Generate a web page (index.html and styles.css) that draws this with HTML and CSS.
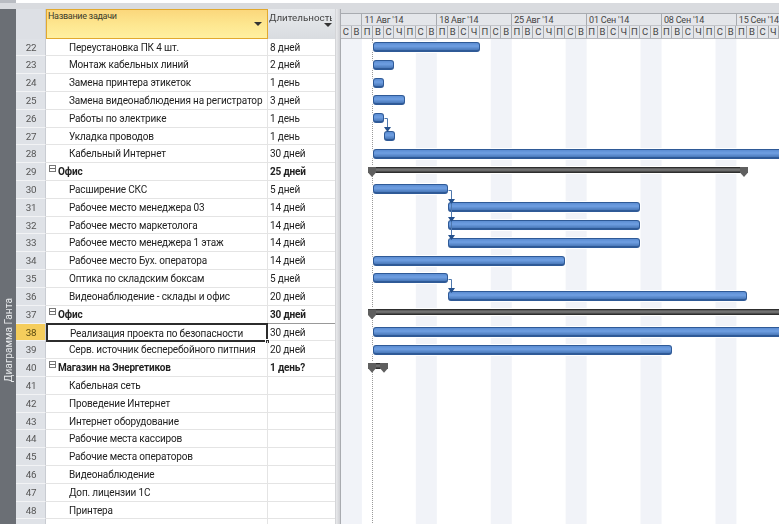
FILE: index.html
```html
<!DOCTYPE html>
<html lang="ru">
<head>
<meta charset="utf-8">
<title>Диаграмма Ганта</title>
<link rel="stylesheet" href="styles.css">
</head>
<body>
<div class="topstrip"><span class="topicon"></span><span class="topwhite"></span></div>
<div class="main">
  <aside class="viewbar"><span class="viewlabel">Диаграмма Ганта</span></aside>
  <section class="sheet">
    <div class="headrow">
      <div class="numhead"></div>
      <div class="namehead">Название задачи<i class="drop"></i></div>
      <div class="durhead"><span class="durclip">Длительность</span><i class="drop"></i></div>
    </div>
    <div class="row"><div class="num">22</div><div class="name">Переустановка ПК 4 шт.</div><div class="dur">8 дней</div></div>
    <div class="row"><div class="num">23</div><div class="name">Монтаж кабельных линий</div><div class="dur">2 дней</div></div>
    <div class="row"><div class="num">24</div><div class="name">Замена принтера этикеток</div><div class="dur">1 день</div></div>
    <div class="row"><div class="num">25</div><div class="name">Замена видеонаблюдения на регистратор</div><div class="dur">3 дней</div></div>
    <div class="row"><div class="num">26</div><div class="name">Работы по электрике</div><div class="dur">1 день</div></div>
    <div class="row"><div class="num">27</div><div class="name">Укладка проводов</div><div class="dur">1 день</div></div>
    <div class="row"><div class="num">28</div><div class="name">Кабельный Интернет</div><div class="dur">30 дней</div></div>
    <div class="row group"><div class="num">29</div><div class="name"><i class="minus"></i>Офис</div><div class="dur">25 дней</div></div>
    <div class="row"><div class="num">30</div><div class="name">Расширение СКС</div><div class="dur">5 дней</div></div>
    <div class="row"><div class="num">31</div><div class="name">Рабочее место менеджера 03</div><div class="dur">14 дней</div></div>
    <div class="row"><div class="num">32</div><div class="name">Рабочее место маркетолога</div><div class="dur">14 дней</div></div>
    <div class="row"><div class="num">33</div><div class="name">Рабочее место менеджера 1 этаж</div><div class="dur">14 дней</div></div>
    <div class="row"><div class="num">34</div><div class="name">Рабочее место Бух. оператора</div><div class="dur">14 дней</div></div>
    <div class="row"><div class="num">35</div><div class="name">Оптика по складским боксам</div><div class="dur">5 дней</div></div>
    <div class="row"><div class="num">36</div><div class="name">Видеонаблюдение - склады и офис</div><div class="dur">20 дней</div></div>
    <div class="row group"><div class="num">37</div><div class="name"><i class="minus"></i>Офис</div><div class="dur">30 дней</div></div>
    <div class="row current"><div class="num">38</div><div class="name">Реализация проекта по безопасности<i class="handle"></i></div><div class="dur">30 дней</div></div>
    <div class="row"><div class="num">39</div><div class="name">Серв. источник бесперебойного питпния</div><div class="dur">20 дней</div></div>
    <div class="row group"><div class="num">40</div><div class="name"><i class="minus"></i>Магазин на Энергетиков</div><div class="dur">1 день?</div></div>
    <div class="row"><div class="num">41</div><div class="name">Кабельная сеть</div><div class="dur"></div></div>
    <div class="row"><div class="num">42</div><div class="name">Проведение Интернет</div><div class="dur"></div></div>
    <div class="row"><div class="num">43</div><div class="name">Интернет оборудование</div><div class="dur"></div></div>
    <div class="row"><div class="num">44</div><div class="name">Рабочие места кассиров</div><div class="dur"></div></div>
    <div class="row"><div class="num">45</div><div class="name">Рабочие места операторов</div><div class="dur"></div></div>
    <div class="row"><div class="num">46</div><div class="name">Видеонаблюдение</div><div class="dur"></div></div>
    <div class="row"><div class="num">47</div><div class="name">Доп. лицензии 1С</div><div class="dur"></div></div>
    <div class="row"><div class="num">48</div><div class="name">Принтера</div><div class="dur"></div></div>
    <div class="row"><div class="num"></div><div class="name"></div><div class="dur"></div></div>
  </section>
  <div class="splitter"></div>
  <section class="gantt">
    <div class="timescale">
      <div class="weeks">
        <div class="week blank"></div>
        <div class="week">11 Авг '14</div>
        <div class="week">18 Авг '14</div>
        <div class="week">25 Авг '14</div>
        <div class="week">01 Сен '14</div>
        <div class="week">08 Сен '14</div>
        <div class="week">15 Сен '14</div>
      </div>
      <div class="days">
        <span>С</span><span>В</span>
        <span>П</span><span>В</span><span>С</span><span>Ч</span><span>П</span><span>С</span><span>В</span>
        <span>П</span><span>В</span><span>С</span><span>Ч</span><span>П</span><span>С</span><span>В</span>
        <span>П</span><span>В</span><span>С</span><span>Ч</span><span>П</span><span>С</span><span>В</span>
        <span>П</span><span>В</span><span>С</span><span>Ч</span><span>П</span><span>С</span><span>В</span>
        <span>П</span><span>В</span><span>С</span><span>Ч</span><span>П</span><span>С</span><span>В</span>
        <span>П</span><span>В</span><span>С</span><span>Ч</span>
      </div>
    </div>
    <div class="chart">
      <div class="today"></div>
      <div class="grow"><div class="bar" style="left:32px;width:107px"></div></div>
      <div class="grow"><div class="bar" style="left:32px;width:21px"></div></div>
      <div class="grow"><div class="bar" style="left:32px;width:11px"></div></div>
      <div class="grow"><div class="bar" style="left:32px;width:32px"></div></div>
      <div class="grow"><div class="bar" style="left:32px;width:11px"></div></div>
      <div class="grow"><div class="bar" style="left:43px;width:11px"></div></div>
      <div class="grow"><div class="bar" style="left:32px;width:460px"></div></div>
      <div class="grow"><div class="summary" style="left:27px;width:380px"><i class="cap capl"></i><i class="cap capr"></i></div></div>
      <div class="grow"><div class="bar" style="left:32px;width:75px"></div></div>
      <div class="grow"><div class="bar" style="left:107px;width:192px"></div></div>
      <div class="grow"><div class="bar" style="left:107px;width:192px"></div></div>
      <div class="grow"><div class="bar" style="left:107px;width:192px"></div></div>
      <div class="grow"><div class="bar" style="left:32px;width:192px"></div></div>
      <div class="grow"><div class="bar" style="left:32px;width:75px"></div></div>
      <div class="grow"><div class="bar" style="left:107px;width:299px"></div></div>
      <div class="grow"><div class="summary" style="left:27px;width:460px"><i class="cap capl"></i></div></div>
      <div class="grow"><div class="bar" style="left:32px;width:460px"></div></div>
      <div class="grow"><div class="bar" style="left:32px;width:299px"></div></div>
      <div class="grow"><div class="summary" style="left:27px;width:20px"><i class="cap capl"></i><i class="cap capr"></i></div></div>
      <svg class="links" width="439" height="486" viewBox="0 0 439 486">
        <g class="linkline">
          <path d="M43.5 79.5H46.5V88"/>
          <path d="M107.5 151.5H110.5V160"/>
          <path d="M110.5 165V178"/>
          <path d="M110.5 183V196"/>
          <path d="M107.5 240.5H110.5V249"/>
        </g>
        <g class="linkhead">
          <path d="M43 88H50L46.5 93Z"/>
          <path d="M107 160H114L110.5 165Z"/>
          <path d="M107 178H114L110.5 183Z"/>
          <path d="M107 196H114L110.5 201Z"/>
          <path d="M107 249H114L110.5 254Z"/>
        </g>
      </svg>
    </div>
  </section>
</div>
</body>
</html>
```
FILE: styles.css
```css
* { box-sizing: border-box; }
html, body { margin: 0; height: 100%; }
body {
  width: 779px;
  height: 524px;
  overflow: hidden;
  background: #fff;
  font-family: Roboto, "Liberation Sans", sans-serif;
  font-size: 10px;
  letter-spacing: -0.16px;
  color: #222;
  filter: blur(0.35px);
}
.topstrip {
  height: 9px;
  background: #d9dbdf;
  position: relative;
  display: flex;
}
.topicon { width: 16px; height: 3px; background: #b9bcc2; }
.topwhite { flex: 1; height: 3px; background: #fff; }
.main { display: flex; height: 515px; }
.viewbar {
  width: 16px;
  background: #6b6f75;
  display: flex;
  align-items: flex-end;
  justify-content: center;
  padding-bottom: 142px;
}
.viewlabel {
  writing-mode: vertical-rl;
  transform: rotate(180deg);
  color: #e6e8ea;
  font-size: 10.2px;
  letter-spacing: 0;
  white-space: nowrap;
}
.sheet { width: 320px; flex: none; border-right: 1px solid #d4d5d8; }
.headrow { display: flex; height: 29.5px; }
.numhead { width: 30px; background: #dde0e5; border-right: 1px solid #c9ccd2; }
.namehead {
  width: 222px;
  position: relative;
  padding-left: 1px;
  font-size: 9px;
  letter-spacing: -0.3px;
  line-height: 13px;
  color: #3b3b2a;
  background: linear-gradient(#fbd77c, #fde68f 50%, #fff0a0);
  border: 1px solid #e2a92e;
}
.durhead {
  flex: 1;
  position: relative;
  padding: 3px 0 0 1px;
  font-size: 9.8px;
  letter-spacing: 0;
  line-height: 12px;
  color: #444;
  background: linear-gradient(#e8eaed, #d9dce0);
}
.durclip { display: block; width: 63px; overflow: hidden; white-space: nowrap; }
.drop {
  position: absolute;
  right: 5px;
  top: 12px;
  width: 0;
  height: 0;
  border: 4px solid transparent;
  border-top-color: #333;
  border-bottom: 0;
}
.durhead .drop { right: 3px; top: 14px; }
.row { display: flex; height: 17.82px; line-height: 18px; }
.num {
  width: 30px;
  text-align: center;
  padding-left: 1px;
  background: #dfe2e7;
  color: #555;
  font-size: 9.8px;
  line-height: 17px;
  border-bottom: 1px solid #f2f3f5;
  border-right: 1px solid #c9ccd2;
}
.name {
  width: 222px;
  position: relative;
  padding-left: 23px;
  white-space: nowrap;
  border-bottom: 1px solid #e4e4e4;
  border-right: 1px solid #e4e4e4;
}
.dur {
  flex: 1;
  padding-left: 2px;
  white-space: nowrap;
  border-bottom: 1px solid #e4e4e4;
}
.group .name, .group .dur { font-weight: 700; }
.group .name { padding-left: 12px; }
.minus {
  position: absolute;
  left: 3px;
  top: 2px;
  width: 7px;
  height: 7px;
  border: 1px solid #777;
  background: linear-gradient(#6a6a6a, #6a6a6a) center / 5px 1px no-repeat #fff;
}
.current .num { background: #f5cd5c; color: #5a4a10; }
.current .name {
  border: 2px solid #2c2c2c;
  padding-left: 22px;
  line-height: 17px;
  margin-top: -1px;
  height: 19px;
}
.current .dur { border-top: 1px solid #999; margin-top: -1px; height: 18.8px; line-height: 18px; }
.handle {
  position: absolute;
  right: -4px;
  bottom: -4px;
  width: 5px;
  height: 5px;
  background: #2c2c2c;
  border: 1px solid #fff;
}
.splitter {
  width: 5px;
  flex: none;
  background: linear-gradient(to right, #e9eaec, #cfd0d4);
  border-right: 1px solid #a9abb0;
}
.gantt { flex: 1; min-width: 0; overflow: hidden; }
.timescale { height: 29.5px; padding-top: 4px; background: #d9dbdf; width: 439px; }
.weeks { display: flex; height: 13px; background: #e4e6ea; border-top: 1px solid #a8abb0; }
.week {
  width: 74.9px;
  flex: none;
  padding-left: 2px;
  line-height: 12px;
  font-size: 9px;
  letter-spacing: -0.2px;
  white-space: nowrap;
  color: #444;
  border-right: 1px solid #a8abb0;
  border-bottom: 1px solid #c3c5ca;
}
.week:last-child { width: 42.5px; border-right: 0; }
.week.blank { width: 21.4px; padding: 0; }
.days { display: flex; height: 12.5px; background: #e4e6ea; border-bottom: 1px solid #b5b7bc; }
.days span {
  width: 10.7px;
  flex: none;
  text-align: center;
  font-size: 9.5px;
  letter-spacing: 0;
  line-height: 11px;
  color: #444;
  border-right: 1px solid #a8abb0;
}
.chart {
  position: relative;
  height: 486px;
  padding-top: 0.5px;
  background: linear-gradient(to right, #f1f3f8 21px, transparent 21px) 0 0 / 74.9px 100% repeat-x;
}
.today {
  position: absolute;
  left: 31px;
  top: 0;
  bottom: 0;
  border-left: 1px dotted #9a9a9a;
}
.grow { position: relative; height: 17.8px; }
.bar {
  position: absolute;
  top: 3px;
  height: 10px;
  border: 1px solid #2f5a97;
  border-bottom-width: 2px;
  border-radius: 3px;
  background: linear-gradient(#5c8dd2, #6f9fe2 45%, #4a79ba);
  box-shadow: 0 0 0 1px #fff;
}
.summary {
  position: absolute;
  top: 3.5px;
  height: 6px;
  border: 1px solid #2e2e2e;
  background: linear-gradient(#555, #7c7c7c 50%, #3a3a3a);
  box-shadow: 0 0 0 1px #fff;
}
.cap {
  position: absolute;
  top: -1px;
  width: 8px;
  height: 10px;
  background: #5f5f5f;
  clip-path: polygon(0 0, 100% 0, 100% 55%, 50% 100%, 0 55%);
}
.capl { left: -1px; }
.capr { right: -1px; }
.links { position: absolute; left: 0; top: 0; pointer-events: none; }
.linkline path { fill: none; stroke: #4f78ad; stroke-width: 1; }
.linkhead path { fill: #24508c; }
```
